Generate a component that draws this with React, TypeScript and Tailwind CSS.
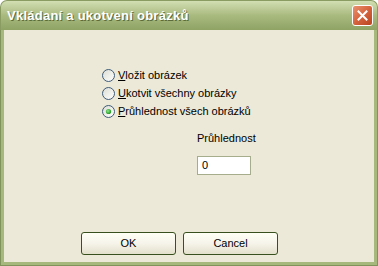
import React from "react";

function Radio({ checked }: { checked?: boolean }) {
  return (
    <svg width="13" height="13" viewBox="0 0 13 13" className="shrink-0">
      <defs>
        <linearGradient id="rg" x1="0" y1="0" x2="1" y2="1">
          <stop offset="0" stopColor="#dcdcd4" />
          <stop offset="1" stopColor="#ffffff" />
        </linearGradient>
        <radialGradient id="dot" cx="0.4" cy="0.4" r="0.6">
          <stop offset="0" stopColor="#8ee68e" />
          <stop offset="1" stopColor="#1f9a1f" />
        </radialGradient>
      </defs>
      <circle cx="6.5" cy="6.5" r="6" fill="url(#rg)" stroke="#3d5a78" strokeWidth="1" />
      {checked && <circle cx="6.5" cy="6.5" r="2.6" fill="url(#dot)" />}
    </svg>
  );
}

function Btn({ label }: { label: string }) {
  return (
    <div className="w-[95px] h-[23px] rounded-[3px] border border-[#37501e] bg-gradient-to-b from-[#fffff6] via-[#f6f4ea] to-[#e3e0cc] flex items-center justify-center text-[11px] text-black">
      {label}
    </div>
  );
}

export default function App() {
  return (
    <div
      className="w-[378px] h-[266px] flex flex-col overflow-hidden"
      style={{ fontFamily: '"Liberation Sans", Arial, sans-serif' }}
    >
      <div className="h-[30px] shrink-0 rounded-t-[7px] bg-gradient-to-b from-[#d2dfb3] via-[#a9ba7f] to-[#8fa365] border-t border-x border-[#8a9c62] flex items-center justify-between pl-[6px] pr-[4px]">
        <span
          className="text-white font-bold text-[13px] tracking-[0.25px]"
          style={{ textShadow: "1px 1px 0 #5b6b3a" }}
        >
          Vkládaní a ukotvení obrázků
        </span>
        <div className="w-[21px] h-[21px] rounded-[3px] border border-white bg-gradient-to-br from-[#e9926e] via-[#d5643e] to-[#b9431f] flex items-center justify-center">
          <svg width="11" height="11" viewBox="0 0 11 11">
            <path d="M1.5 1.5 L9.5 9.5 M9.5 1.5 L1.5 9.5" stroke="#fff" strokeWidth="2" strokeLinecap="square" />
          </svg>
        </div>
      </div>
      <div className="flex-1 flex flex-col bg-[#7f935a] px-px pb-px">
        <div className="flex-1 border-x-[3px] border-b-[3px] border-[#a7b87c] bg-[#ece9d8] flex flex-col text-[11px] text-black">
          <div className="flex flex-col pt-[36px] pl-[98px]">
            <div className="h-[18px] flex items-center gap-[3px]">
              <Radio />
              <span><u>V</u>ložit obrázek</span>
            </div>
            <div className="h-[18px] flex items-center gap-[3px]">
              <Radio />
              <span><u>U</u>kotvit všechny obrázky</span>
            </div>
            <div className="h-[18px] flex items-center gap-[3px]">
              <Radio checked />
              <span><u>P</u>růhlednost všech obrázků</span>
            </div>
          </div>
          <div className="pl-[193px] mt-[12px] h-[13px] leading-[13px]">Průhlednost</div>
          <div className="pl-[193px] mt-[11px]">
            <div className="w-[54px] h-[19px] border border-[#a5ad8c] bg-white flex items-center pl-[4px]">0</div>
          </div>
          <div className="flex gap-[7px] pl-[77px] mt-[57px]">
            <Btn label="OK" />
            <Btn label="Cancel" />
          </div>
        </div>
      </div>
    </div>
  );
}
